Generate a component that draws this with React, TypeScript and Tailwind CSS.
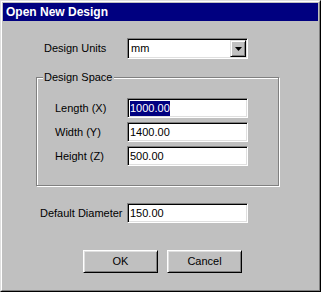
import React from 'react';

const font = { fontFamily: '"Liberation Sans", Arial, sans-serif' };

function TextField({ value, selected = false }: { value: string; selected?: boolean }) {
  return (
    <div className="w-[121px] h-[20px] bg-white border border-t-[#808080] border-l-[#808080] border-b-white border-r-white shadow-[inset_1px_1px_0_#000,inset_-1px_-1px_0_#dfdfdf] flex items-center pl-[2px] text-[11px] leading-none text-black">
      {selected ? <span className="bg-[#000080] text-white py-[2px]">{value}</span> : <span>{value}</span>}
    </div>
  );
}

function Combo({ value }: { value: string }) {
  return (
    <div className="w-[121px] h-[21px] bg-white border border-t-[#808080] border-l-[#808080] border-b-white border-r-white shadow-[inset_1px_1px_0_#000,inset_-1px_-1px_0_#dfdfdf] flex items-stretch p-[1px]">
      <div className="flex-1 flex items-center pl-[2px] text-[11px] leading-none text-black">{value}</div>
      <div className="w-[16px] bg-[#c0c0c0] border border-t-[#dfdfdf] border-l-[#dfdfdf] border-b-black border-r-black shadow-[inset_1px_1px_0_#fff,inset_-1px_-1px_0_#808080] flex items-center justify-center">
        <svg width="7" height="4" viewBox="0 0 7 4">
          <path d="M0 0h7L3.5 4z" fill="#000" />
        </svg>
      </div>
    </div>
  );
}

function Button({ label }: { label: string }) {
  return (
    <div className="w-[75px] h-[23px] bg-[#c0c0c0] border border-t-white border-l-white border-b-black border-r-black shadow-[inset_1px_1px_0_#dfdfdf,inset_-1px_-1px_0_#808080] flex items-center justify-center text-[11px] text-black">
      {label}
    </div>
  );
}

export default function App() {
  return (
    <div className="w-[321px] h-[292px] bg-[#c0c0c0] border border-t-[#dfdfdf] border-l-[#dfdfdf] border-b-black border-r-black" style={font}>
      <div className="h-full border border-t-white border-l-white border-b-[#808080] border-r-[#808080] p-[1px] flex flex-col">
        <div className="h-[18px] bg-[#000080] text-white font-bold text-[12px] leading-none flex items-center pl-[3px]">
          Open New Design
        </div>

        <div className="flex flex-col text-[11px] text-black">
          <div className="flex items-center mt-[17px]">
            <div className="w-[124px] pl-[41px]">Design Units</div>
            <Combo value="mm" />
          </div>

          <div className="relative ml-[33px] mt-[18px] w-[243px] h-[109px] border border-[#808080] shadow-[inset_1px_1px_0_#fff,1px_1px_0_#fff] pt-[20px] flex flex-col gap-[4px]">
            <div className="absolute left-[6px] top-[-8px] bg-[#c0c0c0] px-[1px] leading-[14px]">Design Space</div>
            <div className="flex items-center">
              <div className="w-[90px] pl-[18px]">Length (X)</div>
              <TextField value="1000.00" selected />
            </div>
            <div className="flex items-center">
              <div className="w-[90px] pl-[18px]">Width (Y)</div>
              <TextField value="1400.00" />
            </div>
            <div className="flex items-center">
              <div className="w-[90px] pl-[18px]">Height (Z)</div>
              <TextField value="500.00" />
            </div>
          </div>

          <div className="flex items-center mt-[17px]">
            <div className="w-[124px] pl-[37px]">Default Diameter</div>
            <TextField value="150.00" />
          </div>

          <div className="flex gap-[9px] pl-[80px] mt-[27px]">
            <Button label="OK" />
            <Button label="Cancel" />
          </div>
        </div>
      </div>
    </div>
  );
}
